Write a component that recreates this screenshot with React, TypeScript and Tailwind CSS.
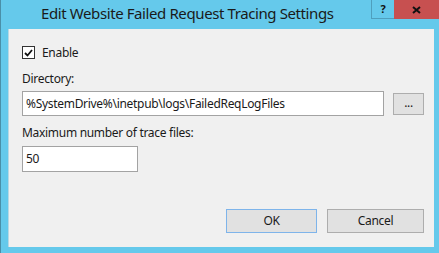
import React from "react";

export default function App() {
  const font = { fontFamily: '"Segoe UI", "Noto Sans", "Open Sans", sans-serif' };
  return (
    <div
      className="w-[439px] h-[253px] bg-[#65c9eb] flex flex-col border-l border-[#4a8fa8] overflow-hidden"
      style={font}
    >
      <div className="h-[29px] flex items-start relative shrink-0">
        <div className="flex-1 pl-[40px] pt-[3px] text-[15px] leading-[20px] tracking-[-0.4px] text-[#1a1a1a]">
          Edit Website Failed Request Tracing Settings
        </div>
        <div className="flex">
          <div className="w-[23px] h-[19px] border-l border-b border-[#4f9fbd] flex items-center justify-center text-[11px] font-bold text-[#111]">
            ?
          </div>
          <div className="w-[45px] h-[19px] bg-[#c75050] flex items-center justify-center">
            <svg width="9" height="8" viewBox="0 0 9 8">
              <path d="M1 1 L8 7 M8 1 L1 7" stroke="#111" strokeWidth="2" />
            </svg>
          </div>
        </div>
      </div>
      <div className="ml-[7px] mr-[5px] h-[218px] bg-[#f0f0f0] border-l border-[#b8d8e4] flex flex-col pl-[13px] pr-[10px] text-[12px] tracking-[-0.3px] text-[#1a1a1a]">
        <div className="flex items-center mt-[17px] h-[13px]">
          <div className="w-[13px] h-[13px] border border-[#333] bg-white flex items-center justify-center">
            <svg width="9" height="8" viewBox="0 0 9 8">
              <path d="M1 4 L3.5 6.5 L8 1" stroke="#111" strokeWidth="1.8" fill="none" />
            </svg>
          </div>
          <span className="ml-[7px] leading-[16px]">Enable</span>
        </div>
        <div className="mt-[12px] leading-[16px]">Directory:</div>
        <div className="flex items-center mt-[4px]">
          <div className="w-[363px] h-[25px] bg-white border border-[#a3a3a3] flex items-center pl-[3px] leading-[16px]">
            %SystemDrive%\inetpub\logs\FailedReqLogFiles
          </div>
          <div className="ml-[9px] w-[31px] h-[22px] bg-[#e1e1e1] border border-[#adadad] flex items-center justify-center text-[12px] leading-[12px] pb-[2px]">
            ...
          </div>
        </div>
        <div className="mt-[9px] leading-[16px]">Maximum number of trace files:</div>
        <div className="mt-[5px] w-[116px] h-[26px] bg-white border border-[#a3a3a3] flex items-center pl-[3px] leading-[16px]">
          50
        </div>
        <div className="flex mt-[37px] justify-end pr-0">
          <div className="w-[91px] h-[24px] bg-[#e1e1e1] border border-[#7eb4ea] flex items-center justify-center">
            OK
          </div>
          <div className="ml-[10px] w-[97px] h-[24px] bg-[#e1e1e1] border border-[#adadad] flex items-center justify-center">
            Cancel
          </div>
        </div>
      </div>
    </div>
  );
}
